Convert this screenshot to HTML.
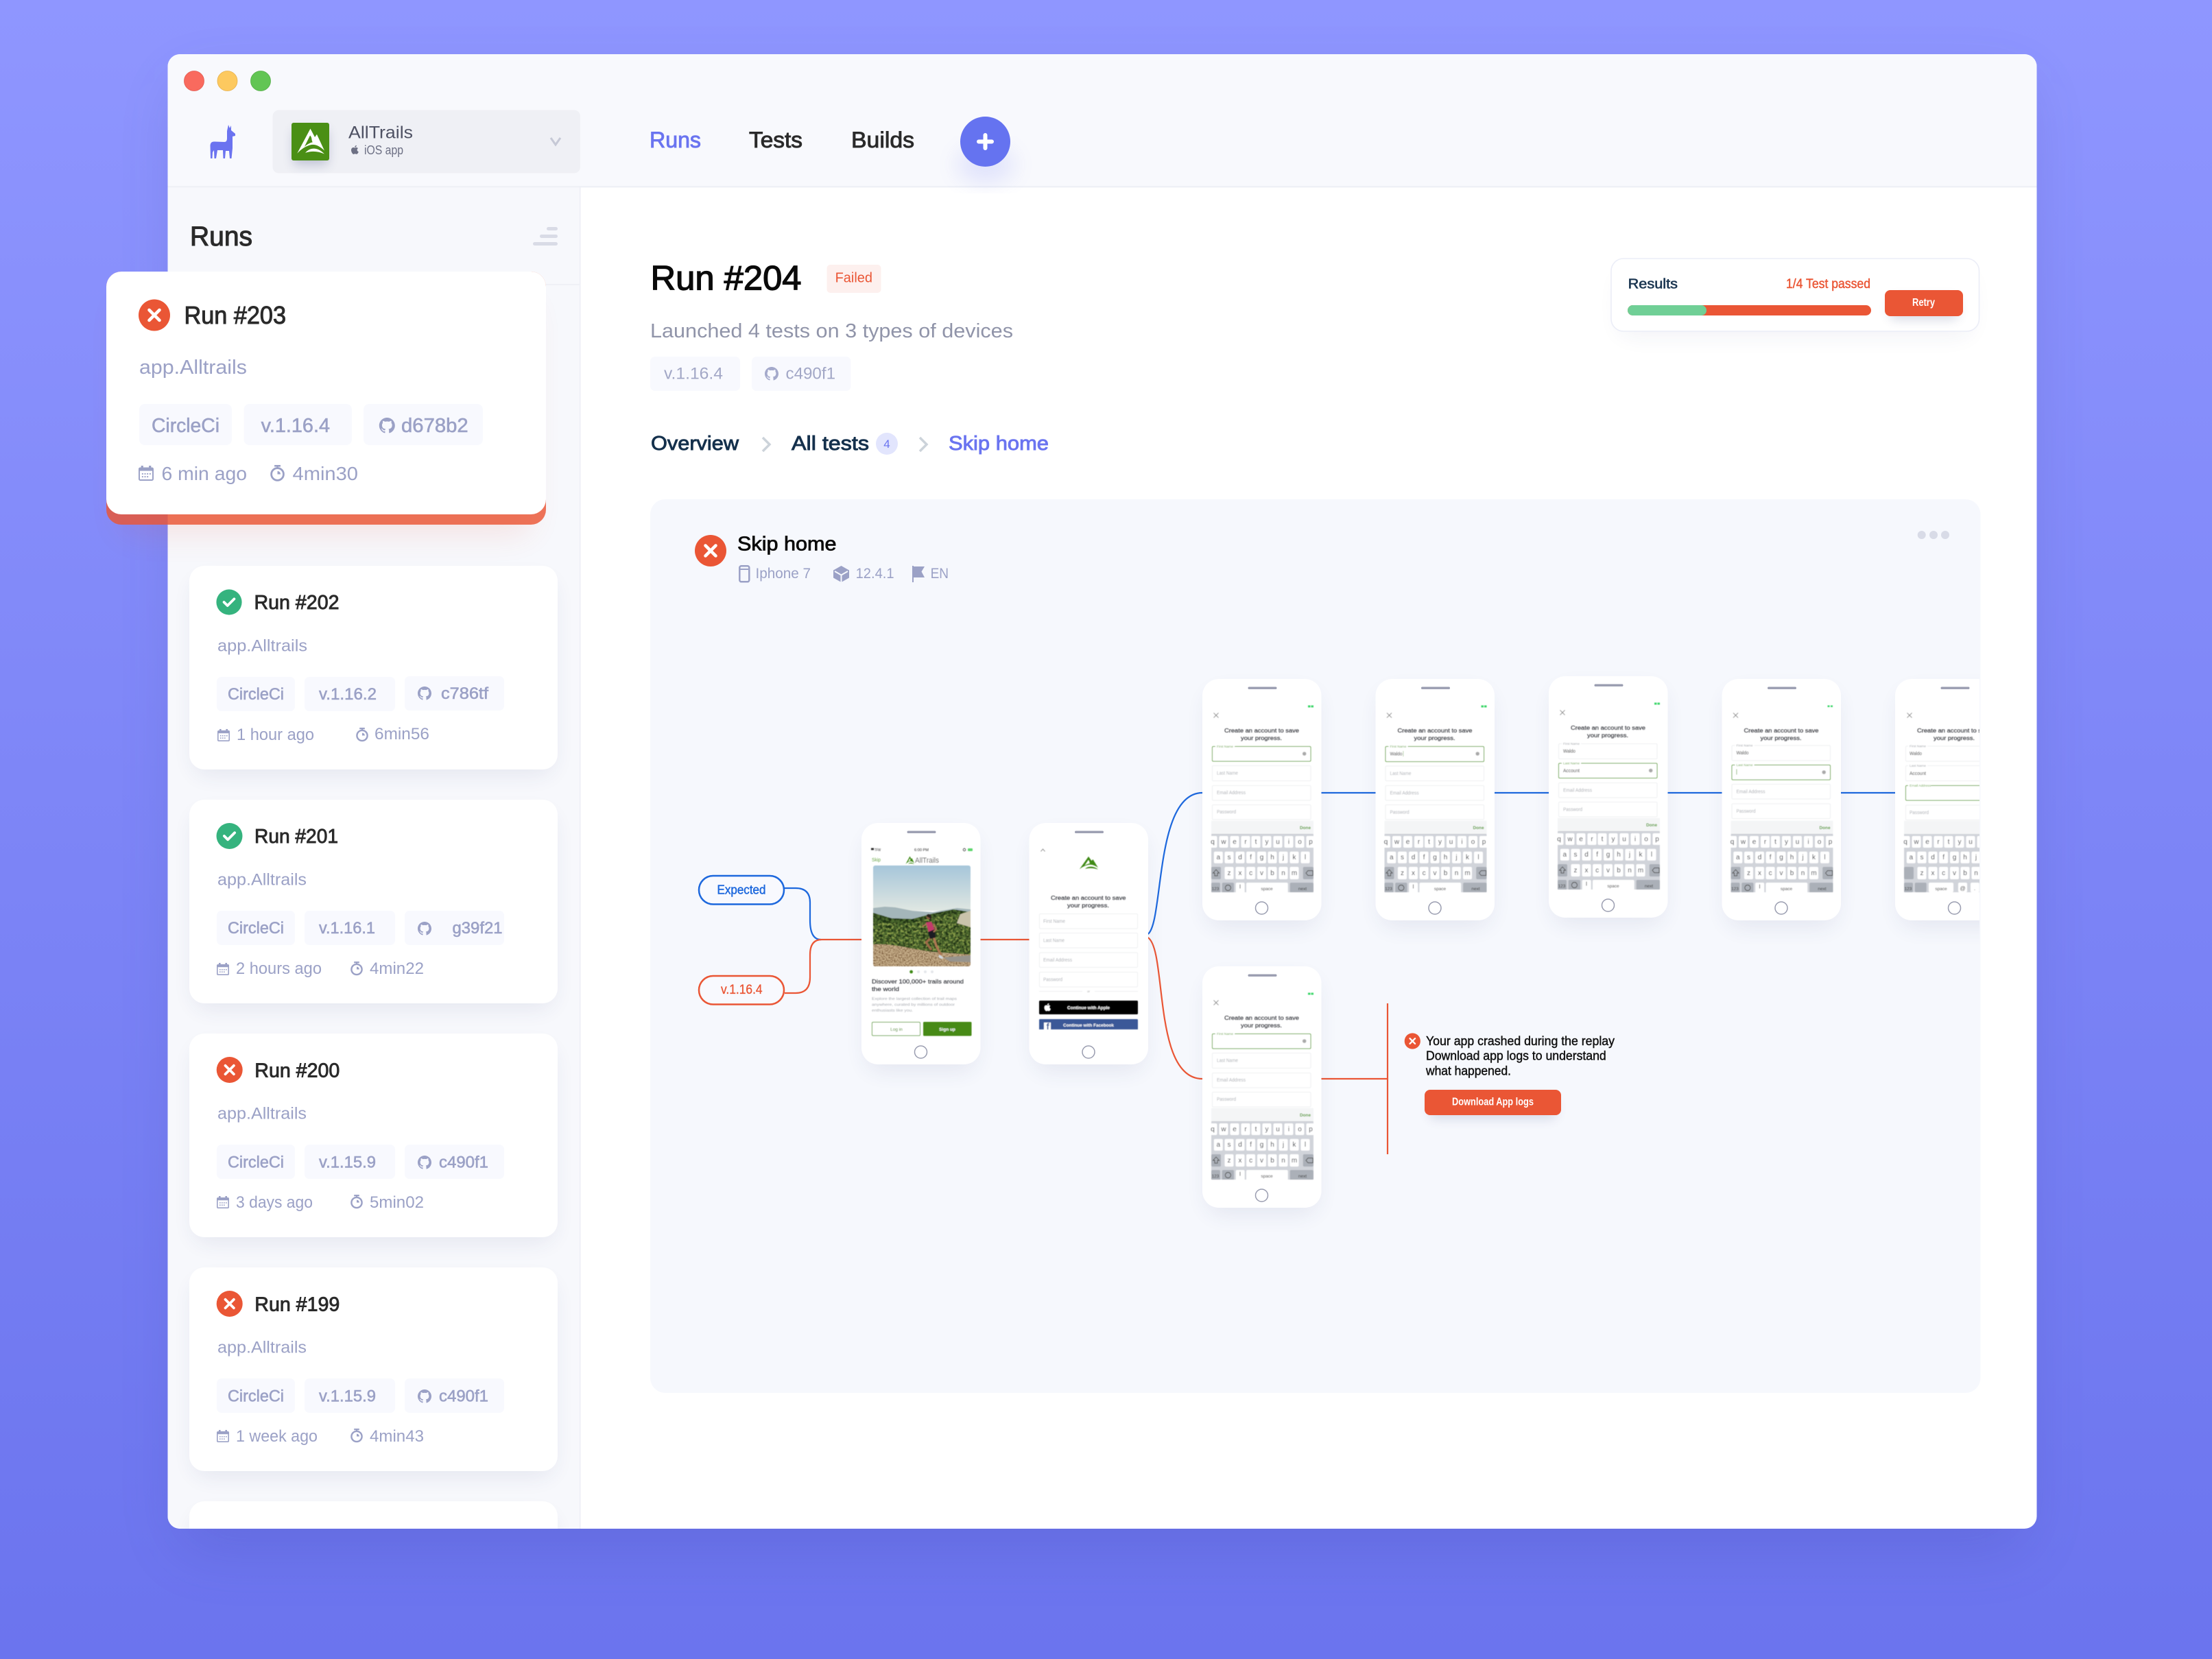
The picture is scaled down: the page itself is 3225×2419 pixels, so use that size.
<!DOCTYPE html>
<html><head><meta charset="utf-8"><title>Run #204</title>
<style>
html,body{margin:0;padding:0;background:#7c83f8}
svg{display:block}
text{font-family:"Liberation Sans",sans-serif}
.g{fill:#9ba1c6}
.gm{fill:#9ba1c6;stroke:#9ba1c6;stroke-width:.6}
.tt{fill:#2a2a2a;stroke:#2a2a2a;stroke-width:.9}
.k{fill:#3a3d44;font-size:10px;text-anchor:middle}
.s{fill:#3d3f45;stroke:#3d3f45;stroke-width:.2;font-size:8px}
.p{fill:#adb0b6;font-size:7px}
.l{fill:#9fa3a9;font-size:4.5px}
.lg{fill:#6aa648;font-size:4.5px}
.v{fill:#333;font-size:7px}
</style></head><body>
<svg xmlns="http://www.w3.org/2000/svg" width="3225" height="2419" viewBox="0 0 3225 2419">
<defs>
<linearGradient id="bg" x1="0" y1="0" x2="0" y2="1"><stop offset="0" stop-color="#8f96ff"/><stop offset="1" stop-color="#6b74ee"/></linearGradient>
<linearGradient id="sky" x1="0" y1="0" x2="0" y2="1"><stop offset="0" stop-color="#a6c6da"/><stop offset="1" stop-color="#e0e7e2"/></linearGradient>
<filter id="wsh" x="-10%" y="-10%" width="120%" height="120%"><feGaussianBlur stdDeviation="45"/></filter>
<filter id="b30" x="-30%" y="-30%" width="160%" height="160%"><feGaussianBlur stdDeviation="22"/></filter>
<filter id="b20" x="-40%" y="-30%" width="180%" height="160%"><feGaussianBlur stdDeviation="16"/></filter>
<filter id="b8" x="-50%" y="-80%" width="200%" height="260%"><feGaussianBlur stdDeviation="8"/></filter>
<filter id="soft" x="-5%" y="-5%" width="110%" height="110%"><feGaussianBlur stdDeviation=".4"/></filter>
<filter id="vegd" x="0" y="0" width="100%" height="100%" color-interpolation-filters="sRGB"><feTurbulence type="fractalNoise" baseFrequency=".24" numOctaves="3" seed="4"/><feColorMatrix values="0 0 0 0 .12  0 0 0 0 .19  0 0 0 0 .08  3.5 0 0 0 -1.3"/><feComposite in2="SourceGraphic" operator="in"/></filter>
<filter id="vegl" x="0" y="0" width="100%" height="100%" color-interpolation-filters="sRGB"><feTurbulence type="fractalNoise" baseFrequency=".3" numOctaves="3" seed="11"/><feColorMatrix values="0 0 0 0 .56  0 0 0 0 .64  0 0 0 0 .3  3.5 0 0 0 -1.6"/><feComposite in2="SourceGraphic" operator="in"/></filter>
<filter id="sand" x="0" y="0" width="100%" height="100%" color-interpolation-filters="sRGB"><feTurbulence type="fractalNoise" baseFrequency=".5" numOctaves="2" seed="7"/><feColorMatrix values="0 0 0 0 .5  0 0 0 0 .38  0 0 0 0 .25  3 0 0 0 -1.2"/><feComposite in2="SourceGraphic" operator="in"/></filter>
<clipPath id="win"><rect x="244.500" y="79" width="2725" height="2150" rx="18"/></clipPath>
<clipPath id="pan"><rect x="948" y="728" width="1938" height="1303" rx="22"/></clipPath>
<clipPath id="photo"><rect x="1273" y="1262" width="142" height="147" rx="3"/></clipPath>
<clipPath id="kbc"><rect x="13" y="226" width="149" height="85" rx="1"/></clipPath>
<clipPath id="fb"><rect x="1515" y="1459" width="144" height="42"/></clipPath>
<g id="err"><circle r="20" fill="#ea5635"/><path d="M-6.500-6.500L6.500 6.500M6.500-6.500L-6.500 6.500" stroke="#fff" stroke-width="4" stroke-linecap="round"/></g>
<g id="ok"><circle r="20" fill="#35b37e"/><path d="M-8 0L-2.500 5.500L8-5" stroke="#fff" stroke-width="4" fill="none" stroke-linecap="round" stroke-linejoin="round"/></g>
<path id="gh" fill="#9ba1c6" fill-rule="evenodd" transform="scale(1.25)" d="M8 0C3.58 0 0 3.58 0 8c0 3.54 2.29 6.53 5.47 7.59.4.07.55-.17.55-.38 0-.19-.01-.82-.01-1.49-2.01.37-2.53-.49-2.69-.94-.09-.23-.48-.94-.82-1.13-.28-.15-.68-.52-.01-.53.63-.01 1.08.58 1.23.82.72 1.21 1.87.87 2.33.66.07-.52.28-.87.51-1.07-1.78-.2-3.64-.89-3.64-3.95 0-.87.31-1.59.82-2.15-.08-.2-.36-1.02.08-2.12 0 0 .67-.21 2.2.82.64-.18 1.32-.27 2-.27.68 0 1.36.09 2 .27 1.53-1.04 2.2-.82 2.2-.82.44 1.1.16 1.92.08 2.12.51.56.82 1.27.82 2.15 0 3.07-1.87 3.75-3.65 3.95.29.25.54.73.54 1.48 0 1.07-.01 1.93-.01 2.2 0 .21.15.46.55.38A8.013 8.013 0 0016 8c0-4.42-3.58-8-8-8z"/>
<g id="cal"><rect y="2" width="18" height="16" rx="2" fill="#9ba1c6"/><rect x="3" width="2.600" height="4" fill="#9ba1c6"/><rect x="12.400" width="2.600" height="4" fill="#9ba1c6"/><rect x="1.600" y="6.200" width="14.800" height="10.200" fill="#fff"/><path d="M4 9h1.600v1.600H4zM7 9h1.600v1.600H7zM10 9h1.600v1.600H10zM13 9h1.600v1.600H13zM4 12.400h1.600V14H4zM7 12.400h1.600V14H7zM10 12.400h1.600V14H10z" fill="#9ba1c6"/></g>
<g id="tm"><circle cx="9" cy="11.500" r="7.600" fill="none" stroke="#9ba1c6" stroke-width="2.400"/><rect x="5.200" width="7.600" height="2.200" fill="#9ba1c6"/><rect x="8" y="1" width="2" height="3" fill="#9ba1c6"/><path d="M9 11.500V7.600A3.900 3.900 0 0 1 12.900 11.500Z" fill="#9ba1c6"/></g>
<g id="card"><rect x="6" y="20" width="525" height="285" rx="22" fill="#28326e" opacity=".085" filter="url(#b20)"/><rect width="537" height="297" rx="22" fill="#fff"/></g>
<g id="ph"><rect x="6" y="18" width="162" height="344" rx="24" fill="#2a3570" opacity=".085" filter="url(#b20)"/><rect width="173.500" height="352" rx="24" fill="#fff"/><rect x="66.500" y="11.500" width="42" height="3.400" rx="1.700" fill="#9a9db0"/><circle cx="86.500" cy="334" r="9" fill="none" stroke="#9a9db0" stroke-width="1.500"/></g>
<g id="kb"><rect x="13" y="206.700" width="149" height="19.300" fill="#f4f5f6"/><g clip-path="url(#kbc)"><rect x="13" y="226" width="149" height="85" fill="#d1d4da"/><rect x="13" y="225" width="149" height="1.500" fill="#b9bcc2"/>
<g fill="#fff"><rect x="8.500" y="229" width="13" height="17" rx="2"/><rect x="24.500" y="229" width="13" height="17" rx="2"/><rect x="40.500" y="229" width="13" height="17" rx="2"/><rect x="56.500" y="229" width="13" height="17" rx="2"/><rect x="71.500" y="229" width="13" height="17" rx="2"/><rect x="87.500" y="229" width="13" height="17" rx="2"/><rect x="103.500" y="229" width="13" height="17" rx="2"/><rect x="119.500" y="229" width="13" height="17" rx="2"/><rect x="135.500" y="229" width="13" height="17" rx="2"/><rect x="151.500" y="229" width="13" height="17" rx="2"/>
<rect x="16.800" y="251.700" width="13" height="17" rx="2"/><rect x="32.500" y="251.700" width="13" height="17" rx="2"/><rect x="48.500" y="251.700" width="13" height="17" rx="2"/><rect x="64.100" y="251.700" width="13" height="17" rx="2"/><rect x="80" y="251.700" width="13" height="17" rx="2"/><rect x="95.500" y="251.700" width="13" height="17" rx="2"/><rect x="111.500" y="251.700" width="13" height="17" rx="2"/><rect x="127.500" y="251.700" width="13" height="17" rx="2"/><rect x="143.500" y="251.700" width="13" height="17" rx="2"/>
<rect x="32.500" y="274" width="13" height="18" rx="2"/><rect x="48.500" y="274" width="13" height="18" rx="2"/><rect x="64.100" y="274" width="13" height="18" rx="2"/><rect x="80" y="274" width="13" height="18" rx="2"/><rect x="95.500" y="274" width="13" height="18" rx="2"/><rect x="111.500" y="274" width="13" height="18" rx="2"/><rect x="127.500" y="274" width="13" height="18" rx="2"/>
<rect x="48.700" y="297" width="13" height="16" rx="2"/><rect x="64" y="297" width="60.700" height="16" rx="2"/></g>
<g fill="#abb0b8"><rect x="13" y="274" width="14" height="18" rx="2"/><rect x="146.700" y="274" width="15.300" height="18" rx="2"/><rect x="13" y="297" width="13" height="16" rx="2"/><rect x="28.700" y="297" width="17.300" height="16" rx="2"/><rect x="127.700" y="297" width="34.300" height="16" rx="2"/></g>
<path d="M20 278l4.500 5h-2.500v4h-4v-4h-2.500zM151 283l3-3.500h7v7h-7zM37.400 300.500a4 4 0 1 0 .01 0M55 299.500v6" fill="none" stroke="#444" stroke-width=".9"/></g></g>
<path id="mtn" fill-rule="evenodd" d="M50 4L66 34L73 24L100 82C82 64 64 58 50 62C34 66 18 76 3 92ZM49 28L29 68C38 60 48 54 58 52C53 44 57 36 49 28ZM32 90C50 68 78 70 100 94C78 84 54 82 32 90Z"/>
</defs>

<rect width="3225" height="2419" fill="url(#bg)"/>
<rect x="260" y="120" width="2695" height="2140" rx="30" fill="#2b2f8a" opacity=".16" filter="url(#wsh)"/>
<g clip-path="url(#win)">
<rect x="244" y="79" width="2726" height="2150" fill="#fff"/>
<rect x="244" y="79" width="2726" height="193" fill="#f8f9fd"/>
<rect x="244" y="272" width="602" height="1957" fill="#f7f8fc"/>
<rect x="244" y="271" width="2726" height="2.500" fill="#eff1f6"/>
<rect x="845" y="272" width="1.500" height="1957" fill="#eceef5"/>
<rect x="244" y="414" width="602" height="2" fill="#eff0f6"/>

<circle cx="283" cy="118" r="14.500" fill="#f96a5e" stroke="#e2584f" stroke-width=".8"/>
<circle cx="331.500" cy="118" r="14.500" fill="#fdc95f" stroke="#e6b04c" stroke-width=".8"/>
<circle cx="380" cy="118" r="14.500" fill="#62c554" stroke="#53ad47" stroke-width=".8"/>

<path fill="#6b73f0" transform="translate(306 182)" d="M27 0L29 5L31 1L31 8L37 13L37 16L33 17L33 34L31.500 49L29 49L28 38L23 38L22 49L19.500 49L19 37L11 37L9 49L6.500 49L6 37L4 40L3.500 49L1 49L.5 30Q1 24 7 24.500L21 25Q25 25 25 20L25 9Z"/>

<rect x="397.500" y="160.500" width="448.500" height="92" rx="9" fill="#eff0f5"/>
<rect x="428" y="190" width="50" height="50" rx="4" fill="#2a3570" opacity=".25" filter="url(#b8)"/>
<rect x="425" y="179" width="55" height="55" rx="3" fill="#4a8f15"/>
<use href="#mtn" fill="#fff" transform="translate(432 186) scale(.41)"/>
<text x="508" y="201.500" font-size="25" fill="#4e5163" textLength="94" lengthAdjust="spacingAndGlyphs">AllTrails</text>
<path fill="#6d7084" transform="translate(510 210.500) scale(.95)" d="M11.200 8.500c0-1.600 1.300-2.400 1.400-2.400-.8-1.100-2-1.300-2.400-1.300-1-.1-2 .6-2.500.6s-1.300-.6-2.200-.6C4.400 4.800 3.300 5.500 2.700 6.500c-1.200 2.100-.3 5.200.9 6.900.6.800 1.300 1.800 2.200 1.700.9 0 1.200-.6 2.300-.6s1.400.6 2.300.5c1-.1 1.600-.8 2.100-1.700.7-1 .9-1.900 1-2-.1 0-2.300-.8-2.300-2.800zM9.600 3.600c.5-.6.8-1.400.7-2.200-.7 0-1.500.5-2 1.100-.4.500-.8 1.300-.7 2.100.8 0 1.600-.4 2-1z"/>
<text x="531" y="225" font-size="18" fill="#6d7084" textLength="57" lengthAdjust="spacingAndGlyphs">iOS app</text>
<path d="M803 201L810 211L817 201" fill="none" stroke="#c6c9d6" stroke-width="3"/>

<text x="947" y="215" font-size="32" fill="#6a74f0" stroke="#6a74f0" stroke-width=".9" textLength="75" lengthAdjust="spacingAndGlyphs">Runs</text>
<text x="1092" y="215" font-size="32" fill="#2a2a2a" stroke="#2a2a2a" stroke-width=".9" textLength="78" lengthAdjust="spacingAndGlyphs">Tests</text>
<text x="1241" y="215" font-size="32" fill="#2a2a2a" stroke="#2a2a2a" stroke-width=".9" textLength="92" lengthAdjust="spacingAndGlyphs">Builds</text>
<ellipse cx="1437" cy="240" rx="42" ry="26" fill="#6570f0" opacity=".16" filter="url(#b20)"/>
<circle cx="1436.500" cy="206.500" r="36.500" fill="#6573f0"/>
<path d="M1436.500 197v19M1427 206.500h19" stroke="#fff" stroke-width="6" stroke-linecap="round"/>

<text x="277" y="358" font-size="40" class="tt" style="stroke-width:1.100" textLength="91" lengthAdjust="spacingAndGlyphs">Runs</text>
<rect x="797" y="331" width="16" height="5" rx="2.500" fill="#d9dbe6"/><rect x="787" y="342" width="26" height="5" rx="2.500" fill="#d9dbe6"/><rect x="777" y="353" width="36" height="5" rx="2.500" fill="#d9dbe6"/>

<!-- Run 202 -->
<g transform="translate(0 825)"><use href="#card" x="276"/>
<use href="#ok" transform="translate(334 53) scale(.93)"/>
<text x="370.500" y="63" font-size="29" class="tt" textLength="124" lengthAdjust="spacingAndGlyphs">Run #202</text>
<text x="317" y="124.500" font-size="24" class="g" textLength="131" lengthAdjust="spacingAndGlyphs">app.Alltrails</text>
<rect x="316" y="162" width="114" height="50" rx="7" fill="#f8f9fe"/><rect x="444" y="162" width="132" height="50" rx="7" fill="#f8f9fe"/><rect x="590" y="161" width="145" height="50" rx="7" fill="#f8f9fe"/>
<text x="332" y="195" font-size="24" class="gm" textLength="82" lengthAdjust="spacingAndGlyphs">CircleCi</text>
<text x="465" y="195" font-size="24" class="gm" textLength="84" lengthAdjust="spacingAndGlyphs">v.1.16.2</text>
<use href="#gh" x="609" y="176"/>
<text x="643" y="194" font-size="24" class="gm" textLength="69" lengthAdjust="spacingAndGlyphs">c786tf</text>
<use href="#cal" x="317" y="238"/><text x="345" y="254" font-size="24" class="g" textLength="113" lengthAdjust="spacingAndGlyphs">1 hour ago</text>
<use href="#tm" x="519" y="236"/><text x="546" y="253" font-size="24" class="g" textLength="80" lengthAdjust="spacingAndGlyphs">6min56</text></g>

<!-- Run 201 -->
<g transform="translate(0 1166)"><use href="#card" x="276"/>
<use href="#ok" transform="translate(334.500 53) scale(.95)"/>
<text x="371" y="63" font-size="29" class="tt" textLength="122" lengthAdjust="spacingAndGlyphs">Run #201</text>
<text x="317" y="124.500" font-size="24" class="g" textLength="130" lengthAdjust="spacingAndGlyphs">app.Alltrails</text>
<rect x="316" y="162" width="114" height="50" rx="7" fill="#f8f9fe"/><rect x="444" y="162" width="132" height="50" rx="7" fill="#f8f9fe"/><rect x="590" y="162" width="145" height="50" rx="7" fill="#f8f9fe"/>
<text x="332" y="195" font-size="24" class="gm" textLength="82" lengthAdjust="spacingAndGlyphs">CircleCi</text>
<text x="465" y="195" font-size="24" class="gm" textLength="82" lengthAdjust="spacingAndGlyphs">v.1.16.1</text>
<use href="#gh" x="609" y="178"/>
<text x="659.500" y="195" font-size="24" class="gm" textLength="73" lengthAdjust="spacingAndGlyphs">g39f21</text>
<use href="#cal" x="316" y="238"/><text x="344" y="254" font-size="24" class="g" textLength="125" lengthAdjust="spacingAndGlyphs">2 hours ago</text>
<use href="#tm" x="511" y="236"/><text x="539" y="254" font-size="24" class="g" textLength="79" lengthAdjust="spacingAndGlyphs">4min22</text></g>

<!-- Run 200 -->
<g transform="translate(0 1507)"><use href="#card" x="276"/>
<use href="#err" transform="translate(334.700 53) scale(.95)"/>
<text x="371.300" y="63.700" font-size="29" class="tt" textLength="124" lengthAdjust="spacingAndGlyphs">Run #200</text>
<text x="317" y="124.700" font-size="24" class="g" textLength="130" lengthAdjust="spacingAndGlyphs">app.Alltrails</text>
<rect x="316" y="162" width="114" height="50" rx="7" fill="#f8f9fe"/><rect x="444" y="162" width="132" height="50" rx="7" fill="#f8f9fe"/><rect x="590" y="162" width="145" height="50" rx="7" fill="#f8f9fe"/>
<text x="332" y="195.300" font-size="24" class="gm" textLength="82" lengthAdjust="spacingAndGlyphs">CircleCi</text>
<text x="465" y="195.300" font-size="24" class="gm" textLength="83" lengthAdjust="spacingAndGlyphs">v.1.15.9</text>
<use href="#gh" x="609" y="178"/>
<text x="640" y="195.300" font-size="24" class="gm" textLength="72" lengthAdjust="spacingAndGlyphs">c490f1</text>
<use href="#cal" x="316" y="237"/><text x="344" y="254" font-size="24" class="g" textLength="112" lengthAdjust="spacingAndGlyphs">3 days ago</text>
<use href="#tm" x="511" y="235"/><text x="539" y="254" font-size="24" class="g" textLength="79" lengthAdjust="spacingAndGlyphs">5min02</text></g>

<!-- Run 199 -->
<g transform="translate(0 1848)"><use href="#card" x="276"/>
<use href="#err" transform="translate(334.700 53) scale(.95)"/>
<text x="371.300" y="63.700" font-size="29" class="tt" textLength="124" lengthAdjust="spacingAndGlyphs">Run #199</text>
<text x="317" y="124.700" font-size="24" class="g" textLength="130" lengthAdjust="spacingAndGlyphs">app.Alltrails</text>
<rect x="316" y="162" width="114" height="50" rx="7" fill="#f8f9fe"/><rect x="444" y="162" width="132" height="50" rx="7" fill="#f8f9fe"/><rect x="590" y="162" width="145" height="50" rx="7" fill="#f8f9fe"/>
<text x="332" y="195.300" font-size="24" class="gm" textLength="82" lengthAdjust="spacingAndGlyphs">CircleCi</text>
<text x="465" y="195.300" font-size="24" class="gm" textLength="83" lengthAdjust="spacingAndGlyphs">v.1.15.9</text>
<use href="#gh" x="609" y="178"/>
<text x="640" y="195.300" font-size="24" class="gm" textLength="72" lengthAdjust="spacingAndGlyphs">c490f1</text>
<use href="#cal" x="316" y="237"/><text x="344" y="254" font-size="24" class="g" textLength="119" lengthAdjust="spacingAndGlyphs">1 week ago</text>
<use href="#tm" x="511" y="235"/><text x="539" y="254" font-size="24" class="g" textLength="79" lengthAdjust="spacingAndGlyphs">4min43</text></g>

<use href="#card" x="276" y="2189"/>

<!-- Main header -->
<text x="948.500" y="422.700" font-size="50" fill="#0a0a0a" stroke="#0a0a0a" stroke-width="1.300" textLength="220" lengthAdjust="spacingAndGlyphs">Run #204</text>
<rect x="1205.500" y="386" width="79" height="41" rx="5" fill="#fdf0ee"/>
<text x="1217.600" y="411.500" font-size="20" fill="#ea5635" textLength="54.400" lengthAdjust="spacingAndGlyphs">Failed</text>
<text x="948" y="492" font-size="29" fill="#9094a9" textLength="529" lengthAdjust="spacingAndGlyphs">Launched 4 tests on 3 types of devices</text>
<rect x="948" y="520" width="131" height="50" rx="7" fill="#f8f9fe"/><rect x="1096" y="520" width="144.500" height="50" rx="7" fill="#f8f9fe"/>
<text x="968" y="552.700" font-size="24" fill="#a2a7c6" textLength="86" lengthAdjust="spacingAndGlyphs">v.1.16.4</text>
<use href="#gh" x="1115" y="535" opacity=".9"/>
<text x="1145.500" y="552.700" font-size="24" fill="#a2a7c6" textLength="72.500" lengthAdjust="spacingAndGlyphs">c490f1</text>

<text x="949" y="656" font-size="29" fill="#14304c" stroke="#14304c" stroke-width=".9" textLength="128" lengthAdjust="spacingAndGlyphs">Overview</text>
<path d="M1112 638L1122 648L1112 658" fill="none" stroke="#ccd3da" stroke-width="3.500"/>
<text x="1154" y="656" font-size="29" fill="#14304c" stroke="#14304c" stroke-width=".9" textLength="113" lengthAdjust="spacingAndGlyphs">All tests</text>
<circle cx="1293" cy="647" r="16" fill="#e2e5fd"/>
<text x="1293" y="653" font-size="17" fill="#6a74f0" text-anchor="middle">4</text>
<path d="M1341 638L1351 648L1341 658" fill="none" stroke="#ccd3da" stroke-width="3.500"/>
<text x="1383" y="656" font-size="29" fill="#6a74f0" stroke="#6a74f0" stroke-width=".9" textLength="146" lengthAdjust="spacingAndGlyphs">Skip home</text>

<!-- Results -->
<rect x="2360" y="400" width="514" height="90" rx="18" fill="#28326e" opacity=".06" filter="url(#b20)"/>
<rect x="2349" y="377" width="536.500" height="106" rx="18" fill="#fff" stroke="#ebedf7" stroke-width="1.600"/>
<text x="2373.600" y="420.700" font-size="20" fill="#1a3550" stroke="#1a3550" stroke-width=".6" textLength="72.400" lengthAdjust="spacingAndGlyphs">Results</text>
<text x="2604" y="420" font-size="19" fill="#ea5635" stroke="#ea5635" stroke-width=".45" textLength="123" lengthAdjust="spacingAndGlyphs">1/4 Test passed</text>
<rect x="2373" y="445" width="355" height="15" rx="7.500" fill="#ea5635"/>
<rect x="2373" y="445" width="115" height="15" rx="7.500" fill="#70cf96"/>
<rect x="2755" y="434" width="100" height="32" rx="8" fill="#28326e" opacity=".18" filter="url(#b8)"/>
<rect x="2748" y="423" width="114" height="38" rx="8" fill="#ea5635"/>
<text x="2788" y="446" font-size="16" font-weight="700" fill="#fff" textLength="33" lengthAdjust="spacingAndGlyphs">Retry</text>

<!-- Panel -->
<rect x="948" y="728" width="1939.500" height="1303" rx="22" fill="#f6f8fd"/>
<circle cx="2801.700" cy="780" r="6" fill="#d8dbe7"/><circle cx="2819" cy="780" r="6" fill="#d8dbe7"/><circle cx="2836" cy="780" r="6" fill="#d8dbe7"/>
<use href="#err" transform="translate(1036 803) scale(1.150)"/>
<text x="1075" y="802.700" font-size="29" fill="#0a0a0a" stroke="#0a0a0a" stroke-width=".8" textLength="144.500" lengthAdjust="spacingAndGlyphs">Skip home</text>
<rect x="1078.300" y="825.300" width="14" height="23" rx="2.500" fill="none" stroke="#9ba1c6" stroke-width="2.500"/><rect x="1079" y="829" width="12" height="2" fill="#9ba1c6"/>
<text x="1101.500" y="843" font-size="21" class="g" textLength="80.500" lengthAdjust="spacingAndGlyphs">Iphone 7</text>
<path d="M1226.500 825L1238 831.500V842.500L1226.500 849L1215 842.500V831.500Z" fill="#9ba1c6"/><path d="M1217 833L1226.500 838.500L1236 833M1226.500 838.500V849" fill="none" stroke="#f6f8fd" stroke-width="2"/>
<text x="1247.600" y="843" font-size="21" class="g" textLength="56" lengthAdjust="spacingAndGlyphs">12.4.1</text>
<path d="M1330 825h2v24h-2zM1332 826h16l-4.500 7.500 4.500 8.500h-16z" fill="#9ba1c6"/>
<text x="1356.600" y="843" font-size="21" class="g" textLength="26.500" lengthAdjust="spacingAndGlyphs">EN</text>

<g clip-path="url(#pan)">
<!-- connectors -->
<g fill="none" stroke-width="2.200">
<rect x="1019" y="1277" width="124" height="41.500" rx="20.700" stroke="#1d68dd" fill="#f8f9fe" stroke-width="2.500"/>
<rect x="1019" y="1423" width="124" height="41.500" rx="20.700" stroke="#ea5635" fill="#f8f9fe" stroke-width="2.500"/>
<path d="M1144 1295H1160Q1181 1295 1181 1316V1342Q1181 1370 1197 1370" stroke="#1d68dd"/>
<path d="M1144 1448H1160Q1181 1448 1181 1425V1392Q1181 1370 1198 1370H1256M1429 1370H1501" stroke="#ea5635"/>
<path d="M1673.600 1362C1697 1345 1683 1156 1753 1156H2006M2178 1156H2258M2431 1156H2511M2684 1156H2763" stroke="#1d68dd"/>
<path d="M1673.600 1367C1702 1385 1680 1573 1753 1573H2023" stroke="#ea5635"/>
<path d="M2023 1463V1683" stroke="#ea5635"/>
</g>
<text x="1045.500" y="1303.300" font-size="18" fill="#1d68dd" stroke="#1d68dd" stroke-width=".5" textLength="71" lengthAdjust="spacingAndGlyphs">Expected</text>
<text x="1051" y="1449" font-size="19" fill="#ea5635" stroke="#ea5635" stroke-width=".35" textLength="60.600" lengthAdjust="spacingAndGlyphs">v.1.16.4</text>

<!-- Phone 1 -->
<use href="#ph" x="1256" y="1200"/>
<g filter="url(#soft)">
<rect x="1270" y="1236.500" width="4" height="3" fill="#333"/><text x="1275" y="1241" font-size="5" fill="#333" textLength="9" lengthAdjust="spacingAndGlyphs">TFW</text>
<text x="1333" y="1241" font-size="5" fill="#333" textLength="21" lengthAdjust="spacingAndGlyphs">6:00 PM</text>
<rect x="1411" y="1237" width="7" height="4" rx="1" fill="#5dd66d"/><circle cx="1406" cy="1239" r="1.800" fill="none" stroke="#333" stroke-width=".8"/>
<text x="1271" y="1256" font-size="7" fill="#6aa648" textLength="13" lengthAdjust="spacingAndGlyphs">Skip</text>
<use href="#mtn" fill="#3f8a17" transform="translate(1320 1248) scale(.13)"/>
<text x="1334" y="1258" font-size="11" fill="#777" textLength="35" lengthAdjust="spacingAndGlyphs">AllTrails</text>
<g clip-path="url(#photo)">
<rect x="1273" y="1262" width="142" height="66" fill="url(#sky)"/>
<path d="M1273 1324L1290 1322L1305 1323L1330 1328L1360 1330L1395 1324L1415 1326V1345H1273Z" fill="#a4b6ba"/>
<path d="M1273 1331L1300 1339L1330 1340L1360 1332L1390 1326L1415 1330V1395H1273Z" fill="#4d6a2f"/>
<path d="M1273 1331L1300 1339L1330 1340L1360 1332L1390 1326L1415 1330V1395H1273Z" filter="url(#vegd)"/>
<path d="M1273 1345L1300 1346L1330 1346L1360 1338L1390 1332L1415 1336V1395H1273Z" filter="url(#vegl)"/>
<path d="M1395 1346L1400 1333L1415 1328V1352Z" fill="#c9c3ab"/>
<path d="M1273 1377C1300 1375 1330 1384 1360 1388L1415 1392V1409H1273Z" fill="#c8b08c"/>
<path d="M1273 1377C1300 1375 1330 1384 1360 1388L1415 1392V1409H1273Z" filter="url(#sand)"/>
<path d="M1375 1396L1415 1393V1403L1385 1402Z" fill="#97948d"/>
<path d="M1358 1367L1350 1374L1358 1385" fill="none" stroke="#9d6a48" stroke-width="3"/>
<path d="M1361 1366L1365 1379L1372 1393" fill="none" stroke="#ad7753" stroke-width="3.200"/>
<path d="M1370 1392L1376 1397L1372 1398L1368 1395Z" fill="#cfd6dc"/>
<path d="M1350 1345L1358 1344L1363 1356L1354 1360Z" fill="#c23a6a"/>
<path d="M1353 1359L1363 1355L1364 1367L1356 1369Z" fill="#1c1c24"/>
<path d="M1351 1347L1345 1351M1361 1347L1365 1355L1361 1359" fill="none" stroke="#a87452" stroke-width="2"/>
<circle cx="1354" cy="1337" r="3.400" fill="#8a5a40"/><path d="M1351 1334Q1354 1331 1358 1335L1358 1341Q1355 1338 1351 1336Z" fill="#2c241f"/>
</g>
<circle cx="1328.600" cy="1417" r="2.400" fill="#3f8a17"/><circle cx="1339" cy="1417" r="2" fill="#e4e6ea"/><circle cx="1349" cy="1417" r="2" fill="#e4e6ea"/><circle cx="1359" cy="1417" r="2" fill="#e4e6ea"/>
<text x="1271" y="1434" font-size="7.800" fill="#3d3f45" stroke="#3d3f45" stroke-width=".2" textLength="134" lengthAdjust="spacingAndGlyphs">Discover 100,000+ trails around</text>
<text x="1271" y="1445" font-size="7.800" fill="#3d3f45" stroke="#3d3f45" stroke-width=".2" textLength="40" lengthAdjust="spacingAndGlyphs">the world</text>
<text x="1271" y="1458" font-size="5.800" fill="#a9acb2" textLength="124" lengthAdjust="spacingAndGlyphs">Explore the largest collection of trail maps</text>
<text x="1271" y="1466.500" font-size="5.800" fill="#a9acb2" textLength="121" lengthAdjust="spacingAndGlyphs">anywhere, curated by millions of outdoor</text>
<text x="1271" y="1475" font-size="5.800" fill="#a9acb2" textLength="60" lengthAdjust="spacingAndGlyphs">enthusiasts like you.</text>
<rect x="1271.500" y="1490.500" width="70" height="19.500" rx="1.500" fill="#fff" stroke="#6aa648" stroke-width="1"/>
<rect x="1346" y="1490" width="70.500" height="20.500" rx="1.500" fill="#468a17"/>
<text x="1307" y="1503" font-size="6.500" fill="#468a17" text-anchor="middle">Log in</text>
<text x="1381" y="1503" font-size="6.500" fill="#fff" font-weight="700" text-anchor="middle">Sign up</text>
</g>

<!-- Phone 2 -->
<use href="#ph" x="1500.500" y="1200"/>
<g filter="url(#soft)">
<path d="M1517.500 1241.500L1520.500 1238L1523.500 1241.500" fill="none" stroke="#777" stroke-width=".8"/>
<use href="#mtn" fill="#3f8a17" transform="translate(1573 1248) scale(.28 .21)"/>
<text x="1532" y="1312" class="s" textLength="109.500" lengthAdjust="spacingAndGlyphs">Create an account to save</text>
<text x="1556" y="1323" class="s" textLength="61" lengthAdjust="spacingAndGlyphs">your progress.</text>
<rect x="1515.500" y="1332.500" width="143" height="21.500" rx="1.500" fill="#fff" stroke="#eef0f2"/>
<rect x="1515.500" y="1360.500" width="143" height="21.500" rx="1.500" fill="#fff" stroke="#eef0f2"/>
<rect x="1515.500" y="1389" width="143" height="21.500" rx="1.500" fill="#fff" stroke="#eef0f2"/>
<rect x="1515.500" y="1417.500" width="143" height="21.500" rx="1.500" fill="#fff" stroke="#eef0f2"/>
<text x="1521" y="1345.500" class="p" textLength="32" lengthAdjust="spacingAndGlyphs">First Name</text>
<text x="1521" y="1373.500" class="p" textLength="31" lengthAdjust="spacingAndGlyphs">Last Name</text>
<text x="1521" y="1402" class="p" textLength="42" lengthAdjust="spacingAndGlyphs">Email Address</text>
<text x="1521" y="1430.500" class="p" textLength="28" lengthAdjust="spacingAndGlyphs">Password</text>
<path d="M1515 1445.500h63M1596 1445.500h63" stroke="#eceef0"/>
<text x="1587" y="1447" font-size="4.500" fill="#aaa" text-anchor="middle">or</text>
<rect x="1515" y="1459" width="144" height="20" rx="1.500" fill="#000"/>
<path fill="#fff" transform="translate(1521 1462) scale(.8)" d="M11.200 8.500c0-1.600 1.300-2.400 1.400-2.400-.8-1.100-2-1.300-2.400-1.300-1-.1-2 .6-2.500.6s-1.300-.6-2.200-.6C4.400 4.800 3.300 5.500 2.700 6.500c-1.200 2.100-.3 5.200.9 6.900.6.800 1.300 1.800 2.200 1.700.9 0 1.200-.6 2.300-.6s1.400.6 2.300.5c1-.1 1.600-.8 2.100-1.700.7-1 .9-1.900 1-2-.1 0-2.300-.8-2.300-2.800zM9.600 3.600c.5-.6.8-1.400.7-2.200-.7 0-1.500.5-2 1.100-.4.500-.8 1.300-.7 2.100.8 0 1.600-.4 2-1z"/>
<text x="1556" y="1471.500" font-size="6.500" font-weight="700" fill="#fff" textLength="62" lengthAdjust="spacingAndGlyphs">Continue with Apple</text>
<g clip-path="url(#fb)"><rect x="1515" y="1486" width="144" height="20" rx="1.500" fill="#3b5998"/><rect x="1522" y="1491" width="10" height="14" fill="#fff"/><text x="1525.500" y="1501" font-size="13" font-weight="700" fill="#3b5998">f</text>
<text x="1550" y="1497" font-size="6.500" font-weight="700" fill="#fff" textLength="74" lengthAdjust="spacingAndGlyphs">Continue with Facebook</text></g>
</g>

<!-- Phone 3 -->
<use href="#ph" x="1753" y="990"/>
<g transform="translate(1753 990)" filter="url(#soft)">
<rect x="154" y="38.500" width="3.500" height="3" fill="#3dd66b"/><rect x="158.500" y="38.500" width="3.500" height="3" fill="#3dd66b"/>
<path d="M16.500 49.500L23.500 56.500M23.500 49.500L16.500 56.500" stroke="#777" stroke-width=".8"/>
<text x="32" y="78" class="s" textLength="109" lengthAdjust="spacingAndGlyphs">Create an account to save</text>
<text x="56" y="89" class="s" textLength="60" lengthAdjust="spacingAndGlyphs">your progress.</text>
<rect x="14.500" y="98.500" width="143.500" height="21.500" rx="1.500" fill="#fff" stroke="#6aa648"/><rect x="19" y="96" width="28" height="5" fill="#fff"/>
<text x="21" y="100" class="lg" textLength="24" lengthAdjust="spacingAndGlyphs">First Name</text><circle cx="148.700" cy="109" r="2.800" fill="#aaa"/>
<rect x="14.500" y="126.500" width="143.500" height="22" rx="1.500" fill="#fff" stroke="#eef0f2"/><rect x="14.500" y="155.500" width="143.500" height="21.500" rx="1.500" fill="#fff" stroke="#eef0f2"/><rect x="14.500" y="183.500" width="143.500" height="21.500" rx="1.500" fill="#fff" stroke="#eef0f2"/>
<text x="21" y="139.500" class="p" textLength="31" lengthAdjust="spacingAndGlyphs">Last Name</text>
<text x="21" y="168" class="p" textLength="42" lengthAdjust="spacingAndGlyphs">Email Address</text>
<text x="21" y="196" class="p" textLength="28" lengthAdjust="spacingAndGlyphs">Password</text>
<use href="#kb"/>
<text x="142" y="219" font-size="6.500" font-weight="700" fill="#4f9a2a" textLength="16" lengthAdjust="spacingAndGlyphs">Done</text>
<text x="15 31 47 63 78 94 110 126 142 158" y="240.500" class="k">qwertyuiop</text>
<text x="23.300 39 55 70.600 86.500 102 118 134 150" y="263" class="k">asdfghjkl</text>
<text x="39 55 70.600 86.500 102 118 134" y="286" class="k">zxcvbnm</text>
<text x="19" y="308" font-size="6.500" fill="#333" text-anchor="middle">123</text><text x="94" y="308" font-size="6.500" fill="#333" text-anchor="middle">space</text><text x="146" y="308" font-size="6.500" fill="#333" text-anchor="middle">next</text>
</g>

<!-- Phone 4 -->
<use href="#ph" x="2005.500" y="990"/>
<g transform="translate(2005.500 990)" filter="url(#soft)">
<rect x="154" y="38.500" width="3.500" height="3" fill="#3dd66b"/><rect x="158.500" y="38.500" width="3.500" height="3" fill="#3dd66b"/>
<path d="M16.500 49.500L23.500 56.500M23.500 49.500L16.500 56.500" stroke="#777" stroke-width=".8"/>
<text x="32" y="78" class="s" textLength="109" lengthAdjust="spacingAndGlyphs">Create an account to save</text>
<text x="56" y="89" class="s" textLength="60" lengthAdjust="spacingAndGlyphs">your progress.</text>
<rect x="14.500" y="98.500" width="143.500" height="22" rx="1.500" fill="#fff" stroke="#6aa648"/><rect x="19" y="96" width="28" height="5" fill="#fff"/>
<text x="21" y="100" class="lg" textLength="24" lengthAdjust="spacingAndGlyphs">First Name</text><circle cx="148.700" cy="109" r="2.800" fill="#aaa"/>
<text x="21" y="111.500" class="v" textLength="18" lengthAdjust="spacingAndGlyphs">Waldo</text><rect x="40" y="105" width=".6" height="8" fill="#6aa648"/>
<rect x="14.500" y="127" width="143.500" height="21.500" rx="1.500" fill="#fff" stroke="#eef0f2"/><rect x="14.500" y="155.500" width="143.500" height="21.500" rx="1.500" fill="#fff" stroke="#eef0f2"/><rect x="14.500" y="183.500" width="143.500" height="21.500" rx="1.500" fill="#fff" stroke="#eef0f2"/>
<text x="21" y="140" class="p" textLength="31" lengthAdjust="spacingAndGlyphs">Last Name</text>
<text x="21" y="168.500" class="p" textLength="42" lengthAdjust="spacingAndGlyphs">Email Address</text>
<text x="21" y="196.500" class="p" textLength="28" lengthAdjust="spacingAndGlyphs">Password</text>
<use href="#kb"/>
<text x="142" y="219" font-size="6.500" font-weight="700" fill="#4f9a2a" textLength="16" lengthAdjust="spacingAndGlyphs">Done</text>
<text x="15 31 47 63 78 94 110 126 142 158" y="240.500" class="k">qwertyuiop</text>
<text x="23.300 39 55 70.600 86.500 102 118 134 150" y="263" class="k">asdfghjkl</text>
<text x="39 55 70.600 86.500 102 118 134" y="286" class="k">zxcvbnm</text>
<text x="19" y="308" font-size="6.500" fill="#333" text-anchor="middle">123</text><text x="94" y="308" font-size="6.500" fill="#333" text-anchor="middle">space</text><text x="146" y="308" font-size="6.500" fill="#333" text-anchor="middle">next</text>
</g>

<!-- Phone 5 -->
<use href="#ph" x="2258" y="986"/>
<g transform="translate(2258 986)" filter="url(#soft)">
<rect x="154" y="38.500" width="3.500" height="3" fill="#3dd66b"/><rect x="158.500" y="38.500" width="3.500" height="3" fill="#3dd66b"/>
<path d="M16.500 49.500L23.500 56.500M23.500 49.500L16.500 56.500" stroke="#777" stroke-width=".8"/>
<text x="32" y="78" class="s" textLength="109" lengthAdjust="spacingAndGlyphs">Create an account to save</text>
<text x="56" y="89" class="s" textLength="60" lengthAdjust="spacingAndGlyphs">your progress.</text>
<rect x="14.500" y="98.500" width="143.500" height="22" rx="1.500" fill="#fff" stroke="#eef0f2"/><rect x="19" y="96" width="28" height="5" fill="#fff"/>
<text x="21" y="100" class="l" textLength="24" lengthAdjust="spacingAndGlyphs">First Name</text>
<text x="21" y="111.500" class="v" textLength="18" lengthAdjust="spacingAndGlyphs">Waldo</text>
<rect x="14.500" y="127" width="143.500" height="21.500" rx="1.500" fill="#fff" stroke="#6aa648"/><rect x="19" y="124.500" width="28" height="5" fill="#fff"/>
<text x="21" y="128.500" class="lg" textLength="24" lengthAdjust="spacingAndGlyphs">Last Name</text><circle cx="148.700" cy="137.500" r="2.800" fill="#aaa"/>
<text x="21" y="140" class="v" textLength="24" lengthAdjust="spacingAndGlyphs">Account</text>
<rect x="14.500" y="155.500" width="143.500" height="21.500" rx="1.500" fill="#fff" stroke="#eef0f2"/><rect x="14.500" y="183.500" width="143.500" height="21.500" rx="1.500" fill="#fff" stroke="#eef0f2"/>
<text x="21" y="168.500" class="p" textLength="42" lengthAdjust="spacingAndGlyphs">Email Address</text>
<text x="21" y="196.500" class="p" textLength="28" lengthAdjust="spacingAndGlyphs">Password</text>
<use href="#kb"/>
<text x="142" y="219" font-size="6.500" font-weight="700" fill="#4f9a2a" textLength="16" lengthAdjust="spacingAndGlyphs">Done</text>
<text x="15 31 47 63 78 94 110 126 142 158" y="240.500" class="k">qwertyuiop</text>
<text x="23.300 39 55 70.600 86.500 102 118 134 150" y="263" class="k">asdfghjkl</text>
<text x="39 55 70.600 86.500 102 118 134" y="286" class="k">zxcvbnm</text>
<text x="19" y="308" font-size="6.500" fill="#333" text-anchor="middle">123</text><text x="94" y="308" font-size="6.500" fill="#333" text-anchor="middle">space</text><text x="146" y="308" font-size="6.500" fill="#333" text-anchor="middle">next</text>
</g>

<!-- Phone 6 -->
<use href="#ph" x="2510.500" y="990"/>
<g transform="translate(2510.500 990)" filter="url(#soft)">
<rect x="154" y="38.500" width="3" height="2.500" fill="#3dd66b"/><rect x="158.500" y="38.500" width="3" height="2.500" fill="#3dd66b"/>
<path d="M16.500 49.500L23.500 56.500M23.500 49.500L16.500 56.500" stroke="#777" stroke-width=".8"/>
<text x="32" y="78" class="s" textLength="109" lengthAdjust="spacingAndGlyphs">Create an account to save</text>
<text x="56" y="89" class="s" textLength="60" lengthAdjust="spacingAndGlyphs">your progress.</text>
<rect x="14.500" y="97" width="143.500" height="22" rx="1.500" fill="#fff" stroke="#eef0f2"/><rect x="19" y="94.500" width="28" height="5" fill="#fff"/>
<text x="21" y="98.500" class="l" textLength="24" lengthAdjust="spacingAndGlyphs">First Name</text>
<text x="21" y="110" class="v" textLength="18" lengthAdjust="spacingAndGlyphs">Waldo</text>
<rect x="14.500" y="125.500" width="143.500" height="21.500" rx="1.500" fill="#fff" stroke="#6aa648"/><rect x="19" y="123" width="28" height="5" fill="#fff"/>
<text x="21" y="127" class="lg" textLength="24" lengthAdjust="spacingAndGlyphs">Last Name</text><circle cx="148.700" cy="136" r="2.800" fill="#aaa"/>
<rect x="21" y="131.500" width=".8" height="8" fill="#6aa648"/>
<rect x="14.500" y="153.500" width="143.500" height="21.500" rx="1.500" fill="#fff" stroke="#eef0f2"/><rect x="14.500" y="182" width="143.500" height="21.500" rx="1.500" fill="#fff" stroke="#eef0f2"/>
<text x="21" y="166.500" class="p" textLength="42" lengthAdjust="spacingAndGlyphs">Email Address</text>
<text x="21" y="195" class="p" textLength="28" lengthAdjust="spacingAndGlyphs">Password</text>
<use href="#kb"/>
<text x="142" y="219" font-size="6.500" font-weight="700" fill="#4f9a2a" textLength="16" lengthAdjust="spacingAndGlyphs">Done</text>
<text x="15 31 47 63 78 94 110 126 142 158" y="240.500" class="k">qwertyuiop</text>
<text x="23.300 39 55 70.600 86.500 102 118 134 150" y="263" class="k">asdfghjkl</text>
<text x="39 55 70.600 86.500 102 118 134" y="286" class="k">zxcvbnm</text>
<text x="19" y="308" font-size="6.500" fill="#333" text-anchor="middle">123</text><text x="94" y="308" font-size="6.500" fill="#333" text-anchor="middle">space</text><text x="146" y="308" font-size="6.500" fill="#333" text-anchor="middle">next</text>
</g>

<!-- Phone 7 (clipped) -->
<use href="#ph" x="2763" y="990"/>
<g transform="translate(2763 990)" filter="url(#soft)">
<path d="M17.500 49.500L24.500 56.500M24.500 49.500L17.500 56.500" stroke="#777" stroke-width=".8"/>
<text x="32" y="78" class="s" textLength="109" lengthAdjust="spacingAndGlyphs">Create an account to save</text>
<text x="56" y="89" class="s" textLength="60" lengthAdjust="spacingAndGlyphs">your progress.</text>
<rect x="15.500" y="98" width="143.500" height="22" rx="1.500" fill="#fff" stroke="#eef0f2"/><rect x="19" y="95.500" width="28" height="5" fill="#fff"/>
<text x="21" y="99.500" class="l" textLength="24" lengthAdjust="spacingAndGlyphs">First Name</text>
<text x="21" y="111" class="v" textLength="18" lengthAdjust="spacingAndGlyphs">Waldo</text>
<rect x="15.500" y="126.500" width="143.500" height="22" rx="1.500" fill="#fff" stroke="#eef0f2"/><rect x="19" y="124" width="28" height="5" fill="#fff"/>
<text x="21" y="128" class="l" textLength="24" lengthAdjust="spacingAndGlyphs">Last Name</text>
<text x="21" y="140" class="v" textLength="24" lengthAdjust="spacingAndGlyphs">Account</text>
<rect x="15.500" y="155.500" width="143.500" height="21.500" rx="1.500" fill="#fff" stroke="#6aa648"/><rect x="19" y="153" width="33" height="5" fill="#fff"/>
<text x="21" y="157" class="lg" textLength="31" lengthAdjust="spacingAndGlyphs">Email Address</text>
<rect x="15.500" y="184" width="143.500" height="21.500" rx="1.500" fill="#fff" stroke="#eef0f2"/>
<text x="21" y="197" class="p" textLength="28" lengthAdjust="spacingAndGlyphs">Password</text>
<rect x="13" y="206.700" width="149" height="19.300" fill="#f4f5f6"/>
<rect x="13" y="226" width="149" height="85" fill="#d1d4da"/>
<g fill="#fff"><rect x="8.500" y="229" width="13" height="17" rx="2"/><rect x="24.500" y="229" width="13" height="17" rx="2"/><rect x="40.500" y="229" width="13" height="17" rx="2"/><rect x="56.500" y="229" width="13" height="17" rx="2"/><rect x="71.500" y="229" width="13" height="17" rx="2"/><rect x="87.500" y="229" width="13" height="17" rx="2"/><rect x="103.500" y="229" width="13" height="17" rx="2"/><rect x="119.500" y="229" width="13" height="17" rx="2"/>
<rect x="16.800" y="251.700" width="13" height="17" rx="2"/><rect x="32.500" y="251.700" width="13" height="17" rx="2"/><rect x="48.500" y="251.700" width="13" height="17" rx="2"/><rect x="64.100" y="251.700" width="13" height="17" rx="2"/><rect x="80" y="251.700" width="13" height="17" rx="2"/><rect x="95.500" y="251.700" width="13" height="17" rx="2"/><rect x="111.500" y="251.700" width="13" height="17" rx="2"/>
<rect x="32.500" y="274" width="13" height="18" rx="2"/><rect x="48.500" y="274" width="13" height="18" rx="2"/><rect x="64.100" y="274" width="13" height="18" rx="2"/><rect x="80" y="274" width="13" height="18" rx="2"/><rect x="95.500" y="274" width="13" height="18" rx="2"/><rect x="111.500" y="274" width="13" height="18" rx="2"/>
<rect x="49" y="297" width="36" height="14" rx="2"/><rect x="92" y="297" width="13" height="14" rx="2"/><rect x="110" y="297" width="13" height="14" rx="2"/></g>
<g fill="#abb0b8"><rect x="13" y="274" width="14" height="18" rx="2"/><rect x="13" y="297" width="13" height="14" rx="2"/><rect x="28.700" y="297" width="17" height="14" rx="2"/></g>
<text x="15 31 47 63 78 94 110" y="240.500" class="k">qwertyu</text>
<text x="23.300 39 55 70.600 86.500 102 118" y="263" class="k">asdfghj</text>
<text x="39 55 70.600 86.500 102 118" y="286" class="k">zxcvbn</text>
<text x="19" y="308" font-size="6.500" fill="#333" text-anchor="middle">123</text><text x="67" y="308" font-size="6.500" fill="#333" text-anchor="middle">space</text><text x="98.500" y="308" font-size="8" fill="#333" text-anchor="middle">@</text><text x="116" y="308" font-size="8" fill="#333" text-anchor="middle">.</text>
</g>

<!-- Phone 8 -->
<use href="#ph" x="1753" y="1409"/>
<g transform="translate(1753 1409)" filter="url(#soft)">
<rect x="154" y="38.500" width="3.500" height="3" fill="#3dd66b"/><rect x="158.500" y="38.500" width="3.500" height="3" fill="#3dd66b"/>
<path d="M16.500 49.500L23.500 56.500M23.500 49.500L16.500 56.500" stroke="#777" stroke-width=".8"/>
<text x="32" y="78" class="s" textLength="109" lengthAdjust="spacingAndGlyphs">Create an account to save</text>
<text x="56" y="89" class="s" textLength="60" lengthAdjust="spacingAndGlyphs">your progress.</text>
<rect x="14.500" y="98.500" width="143.500" height="21.500" rx="1.500" fill="#fff" stroke="#6aa648"/><rect x="19" y="96" width="28" height="5" fill="#fff"/>
<text x="21" y="100" class="lg" textLength="24" lengthAdjust="spacingAndGlyphs">First Name</text><circle cx="148.700" cy="109" r="2.800" fill="#aaa"/>
<rect x="14.500" y="126.500" width="143.500" height="22" rx="1.500" fill="#fff" stroke="#eef0f2"/><rect x="14.500" y="155.500" width="143.500" height="21.500" rx="1.500" fill="#fff" stroke="#eef0f2"/><rect x="14.500" y="183.500" width="143.500" height="21.500" rx="1.500" fill="#fff" stroke="#eef0f2"/>
<text x="21" y="139.500" class="p" textLength="31" lengthAdjust="spacingAndGlyphs">Last Name</text>
<text x="21" y="168" class="p" textLength="42" lengthAdjust="spacingAndGlyphs">Email Address</text>
<text x="21" y="196" class="p" textLength="28" lengthAdjust="spacingAndGlyphs">Password</text>
<use href="#kb"/>
<text x="142" y="219" font-size="6.500" font-weight="700" fill="#4f9a2a" textLength="16" lengthAdjust="spacingAndGlyphs">Done</text>
<text x="15 31 47 63 78 94 110 126 142 158" y="240.500" class="k">qwertyuiop</text>
<text x="23.300 39 55 70.600 86.500 102 118 134 150" y="263" class="k">asdfghjkl</text>
<text x="39 55 70.600 86.500 102 118 134" y="286" class="k">zxcvbnm</text>
<text x="19" y="308" font-size="6.500" fill="#333" text-anchor="middle">123</text><text x="94" y="308" font-size="6.500" fill="#333" text-anchor="middle">space</text><text x="146" y="308" font-size="6.500" fill="#333" text-anchor="middle">next</text>
</g>

<!-- Crash message -->
<use href="#err" transform="translate(2059.300 1518) scale(.58)"/>
<text x="2079" y="1524" font-size="18.500" fill="#111" stroke="#111" stroke-width=".45" textLength="275" lengthAdjust="spacingAndGlyphs">Your app crashed during the replay</text>
<text x="2079" y="1545.500" font-size="18.500" fill="#111" stroke="#111" stroke-width=".45" textLength="262.700" lengthAdjust="spacingAndGlyphs">Download app logs to understand</text>
<text x="2079" y="1567.500" font-size="18.500" fill="#111" stroke="#111" stroke-width=".45" textLength="124" lengthAdjust="spacingAndGlyphs">what happened.</text>
<rect x="2084" y="1600" width="185" height="32" rx="8" fill="#28326e" opacity=".14" filter="url(#b8)"/>
<rect x="2077" y="1589" width="199" height="37" rx="8" fill="#ea5635"/>
<text x="2117" y="1611.500" font-size="16" font-weight="700" fill="#fff" textLength="119" lengthAdjust="spacingAndGlyphs">Download App logs</text>
</g>
</g>

<!-- Floating card Run 203 -->
<rect x="175" y="440" width="600" height="340" rx="24" fill="#e0503a" opacity=".12" filter="url(#b30)"/>
<rect x="155" y="396" width="641" height="369" rx="22" fill="#ea5635" opacity=".82"/>
<rect x="155" y="396" width="641" height="354" rx="22" fill="#fff"/>
<use href="#err" transform="translate(225 459.500) scale(1.150)"/>
<text x="268.500" y="472" font-size="36" class="tt" style="stroke-width:1" textLength="148.500" lengthAdjust="spacingAndGlyphs">Run #203</text>
<text x="203" y="545" font-size="29" class="g" textLength="157" lengthAdjust="spacingAndGlyphs">app.Alltrails</text>
<rect x="203" y="589" width="135" height="60" rx="8" fill="#f8f9fe"/><rect x="355.500" y="589" width="157.500" height="60" rx="8" fill="#f8f9fe"/><rect x="530" y="589" width="174" height="60" rx="8" fill="#f8f9fe"/>
<text x="221" y="630" font-size="29" class="gm" textLength="99" lengthAdjust="spacingAndGlyphs">CircleCi</text>
<text x="380.600" y="630" font-size="29" class="gm" textLength="100.400" lengthAdjust="spacingAndGlyphs">v.1.16.4</text>
<use href="#gh" transform="translate(552.800 609) scale(1.150)"/>
<text x="585" y="630" font-size="29" class="gm" textLength="97.700" lengthAdjust="spacingAndGlyphs">d678b2</text>
<use href="#cal" transform="translate(202 679) scale(1.220)"/>
<text x="235.500" y="700" font-size="28" class="g" textLength="124.500" lengthAdjust="spacingAndGlyphs">6 min ago</text>
<use href="#tm" transform="translate(394 678) scale(1.170)"/>
<text x="426.500" y="700" font-size="28" class="g" textLength="95.500" lengthAdjust="spacingAndGlyphs">4min30</text>
</svg>
</body></html>
